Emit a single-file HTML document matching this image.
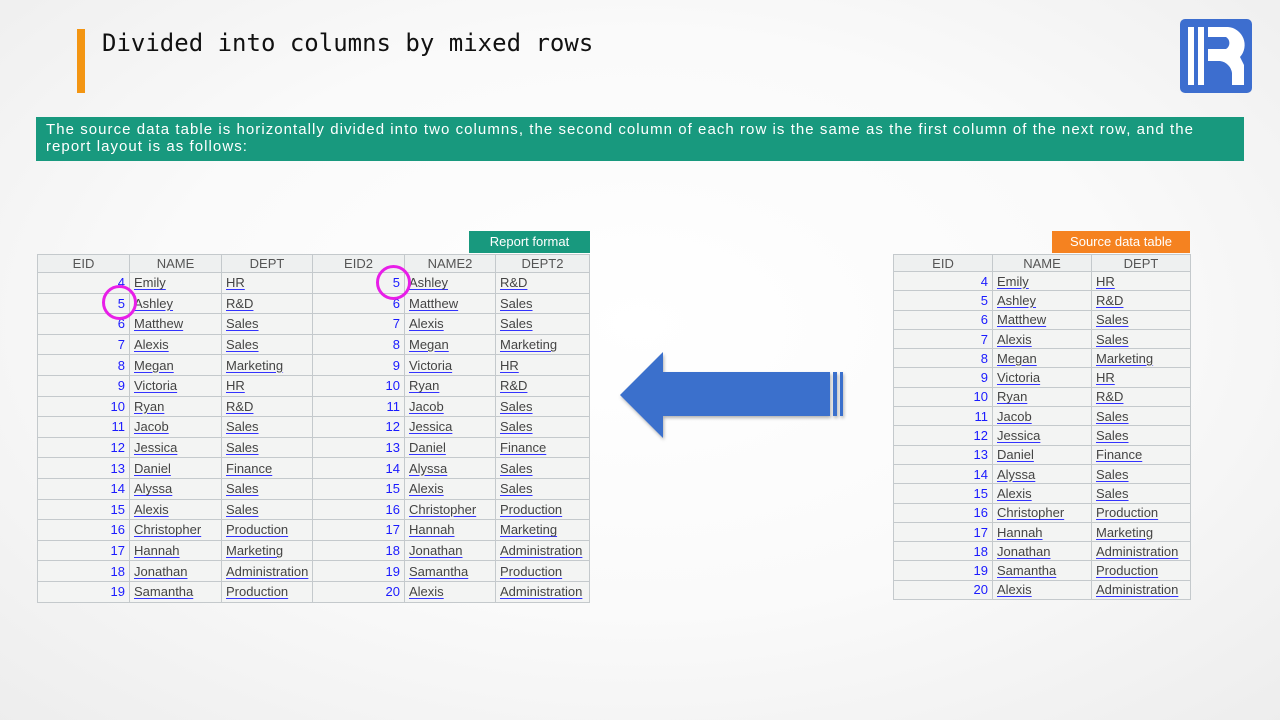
<!DOCTYPE html>
<html><head><meta charset="utf-8"><style>
*{margin:0;padding:0;box-sizing:border-box}
body{width:1280px;height:720px;overflow:hidden;position:relative;font-family:"Liberation Sans",sans-serif;background:radial-gradient(ellipse 75% 80% at 50% 45%,#ffffff 0%,#fafafa 50%,#ececec 100%)}
.abs{position:absolute}
.title{left:102px;top:29px;font-family:"DejaVu Sans Mono","Liberation Mono",monospace;font-size:24px;color:#111;white-space:nowrap;letter-spacing:0px}
.bar{left:77px;top:29px;width:8px;height:64px;background:#f39512}
.banner{left:36px;top:117px;width:1208px;height:44px;background:#18997e;color:#fff;font-size:15px;line-height:17px;padding:4px 10px;white-space:nowrap;letter-spacing:1.05px}
table{position:absolute;border-collapse:collapse;table-layout:fixed;background:#f3f4f3;font-size:13px;color:#444}
td{border:1px solid #c4c9cc;padding:0 4px;white-space:nowrap;overflow:hidden}
tr.h td{background:#eef0f0;text-align:center;color:#555}
td.n{text-align:right;color:#1a1aff}
td.t span{text-decoration:underline;text-decoration-color:#3333ff;text-underline-offset:2px;padding-right:2px}
.tag{color:#fff;font-size:13px;text-align:center;line-height:22px;height:22px}
.circ{border:3px solid #e81ee8;border-radius:50%;width:35px;height:35px}
</style></head><body>
<div class="abs bar"></div>
<div class="abs title">Divided into columns by mixed rows</div>
<svg class="abs" style="left:1180px;top:19px" width="72" height="74" viewBox="0 0 72 74">
<rect x="0" y="0" width="72" height="74" rx="5" fill="#3d6ecf"/>
<rect x="8" y="8" width="6" height="58" fill="#fff"/>
<rect x="18" y="8" width="6" height="58" fill="#fff"/>
<path d="M28 8 H48 A18 18 0 0 1 60 38 L64 46 L64 66 H52 L52 54 A14 14 0 0 0 40 42 H28 V30 H46 A7 7 0 0 0 46 18 H28 Z" fill="#fff"/>
</svg>
<div class="abs banner">The source data table is horizontally divided into two columns, the second column of each row is the same as the first column of the next row, and the<br>report layout is as follows:</div>

<div class="abs tag" style="left:469px;top:231px;width:121px;background:#18997e">Report format</div>
<div class="abs tag" style="left:1052px;top:231px;width:138px;background:#f58220">Source data table</div>

<table style="left:37px;top:254px;width:552px">
<colgroup><col style="width:92px"><col style="width:92px"><col style="width:91px"><col style="width:92px"><col style="width:91px"><col style="width:94px"></colgroup>
<tr class="h" style="height:18px"><td>EID</td><td>NAME</td><td>DEPT</td><td>EID2</td><td>NAME2</td><td>DEPT2</td></tr>
<tr style="height:20.6px"><td class="n">4</td><td class="t"><span>Emily</span></td><td class="t"><span>HR</span></td><td class="n">5</td><td class="t"><span>Ashley</span></td><td class="t"><span>R&amp;D</span></td></tr>
<tr style="height:20.6px"><td class="n">5</td><td class="t"><span>Ashley</span></td><td class="t"><span>R&amp;D</span></td><td class="n">6</td><td class="t"><span>Matthew</span></td><td class="t"><span>Sales</span></td></tr>
<tr style="height:20.6px"><td class="n">6</td><td class="t"><span>Matthew</span></td><td class="t"><span>Sales</span></td><td class="n">7</td><td class="t"><span>Alexis</span></td><td class="t"><span>Sales</span></td></tr>
<tr style="height:20.6px"><td class="n">7</td><td class="t"><span>Alexis</span></td><td class="t"><span>Sales</span></td><td class="n">8</td><td class="t"><span>Megan</span></td><td class="t"><span>Marketing</span></td></tr>
<tr style="height:20.6px"><td class="n">8</td><td class="t"><span>Megan</span></td><td class="t"><span>Marketing</span></td><td class="n">9</td><td class="t"><span>Victoria</span></td><td class="t"><span>HR</span></td></tr>
<tr style="height:20.6px"><td class="n">9</td><td class="t"><span>Victoria</span></td><td class="t"><span>HR</span></td><td class="n">10</td><td class="t"><span>Ryan</span></td><td class="t"><span>R&amp;D</span></td></tr>
<tr style="height:20.6px"><td class="n">10</td><td class="t"><span>Ryan</span></td><td class="t"><span>R&amp;D</span></td><td class="n">11</td><td class="t"><span>Jacob</span></td><td class="t"><span>Sales</span></td></tr>
<tr style="height:20.6px"><td class="n">11</td><td class="t"><span>Jacob</span></td><td class="t"><span>Sales</span></td><td class="n">12</td><td class="t"><span>Jessica</span></td><td class="t"><span>Sales</span></td></tr>
<tr style="height:20.6px"><td class="n">12</td><td class="t"><span>Jessica</span></td><td class="t"><span>Sales</span></td><td class="n">13</td><td class="t"><span>Daniel</span></td><td class="t"><span>Finance</span></td></tr>
<tr style="height:20.6px"><td class="n">13</td><td class="t"><span>Daniel</span></td><td class="t"><span>Finance</span></td><td class="n">14</td><td class="t"><span>Alyssa</span></td><td class="t"><span>Sales</span></td></tr>
<tr style="height:20.6px"><td class="n">14</td><td class="t"><span>Alyssa</span></td><td class="t"><span>Sales</span></td><td class="n">15</td><td class="t"><span>Alexis</span></td><td class="t"><span>Sales</span></td></tr>
<tr style="height:20.6px"><td class="n">15</td><td class="t"><span>Alexis</span></td><td class="t"><span>Sales</span></td><td class="n">16</td><td class="t"><span>Christopher</span></td><td class="t"><span>Production</span></td></tr>
<tr style="height:20.6px"><td class="n">16</td><td class="t"><span>Christopher</span></td><td class="t"><span>Production</span></td><td class="n">17</td><td class="t"><span>Hannah</span></td><td class="t"><span>Marketing</span></td></tr>
<tr style="height:20.6px"><td class="n">17</td><td class="t"><span>Hannah</span></td><td class="t"><span>Marketing</span></td><td class="n">18</td><td class="t"><span>Jonathan</span></td><td class="t"><span>Administration</span></td></tr>
<tr style="height:20.6px"><td class="n">18</td><td class="t"><span>Jonathan</span></td><td class="t"><span>Administration</span></td><td class="n">19</td><td class="t"><span>Samantha</span></td><td class="t"><span>Production</span></td></tr>
<tr style="height:20.6px"><td class="n">19</td><td class="t"><span>Samantha</span></td><td class="t"><span>Production</span></td><td class="n">20</td><td class="t"><span>Alexis</span></td><td class="t"><span>Administration</span></td></tr>
</table>
<div class="abs circ" style="left:102px;top:285px"></div>
<div class="abs circ" style="left:376px;top:265px"></div>

<table style="left:893px;top:254px;width:297px">
<colgroup><col style="width:99px"><col style="width:99px"><col style="width:99px"></colgroup>
<tr class="h" style="height:17px"><td>EID</td><td>NAME</td><td>DEPT</td></tr>
<tr style="height:19.3px"><td class="n">4</td><td class="t"><span>Emily</span></td><td class="t"><span>HR</span></td></tr>
<tr style="height:19.3px"><td class="n">5</td><td class="t"><span>Ashley</span></td><td class="t"><span>R&amp;D</span></td></tr>
<tr style="height:19.3px"><td class="n">6</td><td class="t"><span>Matthew</span></td><td class="t"><span>Sales</span></td></tr>
<tr style="height:19.3px"><td class="n">7</td><td class="t"><span>Alexis</span></td><td class="t"><span>Sales</span></td></tr>
<tr style="height:19.3px"><td class="n">8</td><td class="t"><span>Megan</span></td><td class="t"><span>Marketing</span></td></tr>
<tr style="height:19.3px"><td class="n">9</td><td class="t"><span>Victoria</span></td><td class="t"><span>HR</span></td></tr>
<tr style="height:19.3px"><td class="n">10</td><td class="t"><span>Ryan</span></td><td class="t"><span>R&amp;D</span></td></tr>
<tr style="height:19.3px"><td class="n">11</td><td class="t"><span>Jacob</span></td><td class="t"><span>Sales</span></td></tr>
<tr style="height:19.3px"><td class="n">12</td><td class="t"><span>Jessica</span></td><td class="t"><span>Sales</span></td></tr>
<tr style="height:19.3px"><td class="n">13</td><td class="t"><span>Daniel</span></td><td class="t"><span>Finance</span></td></tr>
<tr style="height:19.3px"><td class="n">14</td><td class="t"><span>Alyssa</span></td><td class="t"><span>Sales</span></td></tr>
<tr style="height:19.3px"><td class="n">15</td><td class="t"><span>Alexis</span></td><td class="t"><span>Sales</span></td></tr>
<tr style="height:19.3px"><td class="n">16</td><td class="t"><span>Christopher</span></td><td class="t"><span>Production</span></td></tr>
<tr style="height:19.3px"><td class="n">17</td><td class="t"><span>Hannah</span></td><td class="t"><span>Marketing</span></td></tr>
<tr style="height:19.3px"><td class="n">18</td><td class="t"><span>Jonathan</span></td><td class="t"><span>Administration</span></td></tr>
<tr style="height:19.3px"><td class="n">19</td><td class="t"><span>Samantha</span></td><td class="t"><span>Production</span></td></tr>
<tr style="height:19.3px"><td class="n">20</td><td class="t"><span>Alexis</span></td><td class="t"><span>Administration</span></td></tr>
</table>

<svg class="abs" style="left:600px;top:340px" width="260" height="110">
<defs><filter id="s" x="-10%" y="-10%" width="130%" height="130%"><feDropShadow dx="1" dy="2" stdDeviation="1.5" flood-opacity="0.3"/></filter></defs>
<g fill="#3b6fcc" filter="url(#s)">
<path d="M20 55 L63 12 L63 32 L230 32 L230 76 L63 76 L63 98 Z"/>
<rect x="233" y="32" width="4" height="44"/>
<rect x="240" y="32" width="3" height="44"/>
</g>
</svg>
</body></html>
